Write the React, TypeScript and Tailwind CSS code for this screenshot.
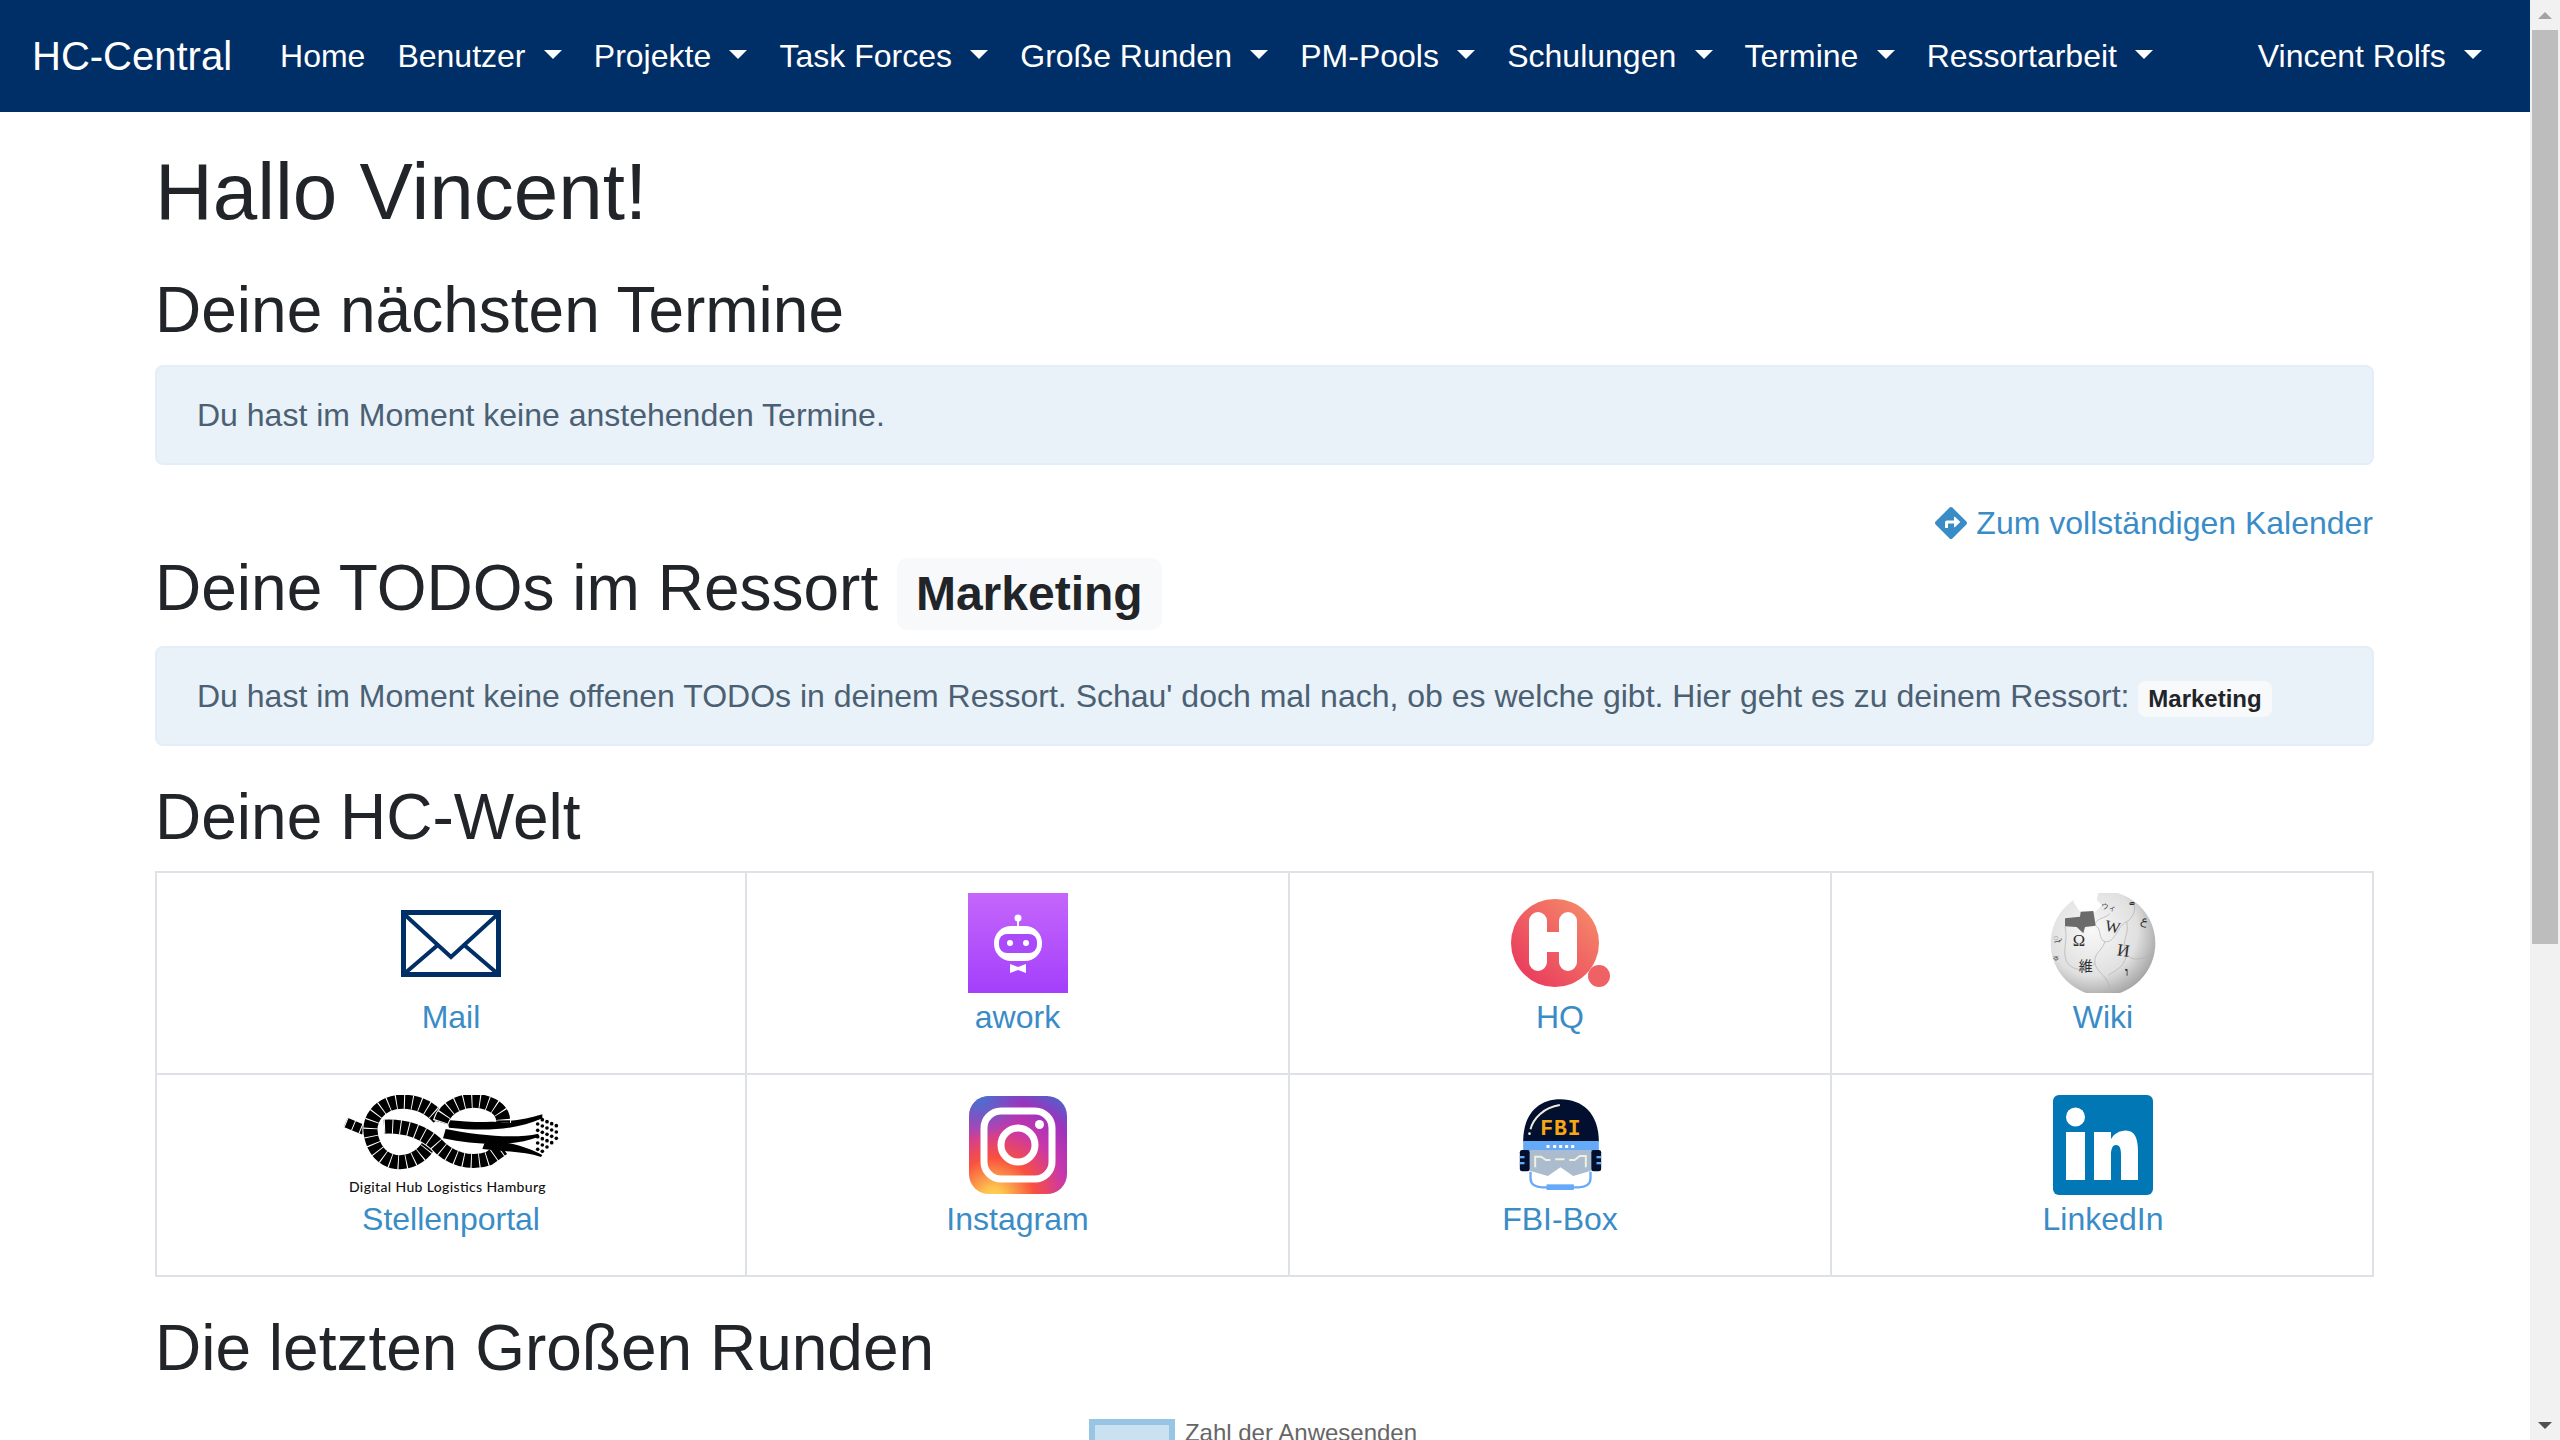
import { FaDirections } from 'react-icons/fa';
import type { ReactNode } from 'react';

const navItems = ['Benutzer', 'Projekte', 'Task Forces', 'Große Runden', 'PM-Pools', 'Schulungen', 'Termine', 'Ressortarbeit'];

function Caret() {
  return <span className="inline-block ml-[18.3px] align-[8px] border-t-[9.6px] border-x-[9.6px] border-x-transparent border-t-white" />;
}

function MailIcon() {
  return (
    <svg width="100" height="67" viewBox="0 0 100 67">
      <rect x="2.5" y="2.5" width="95" height="62" fill="#fff" stroke="#002e66" strokeWidth="5" />
      <path d="M3 4 L50 47 L97 4" fill="none" stroke="#002e66" strokeWidth="4" />
      <path d="M3 64 L38 34 M97 64 L62 34" fill="none" stroke="#002e66" strokeWidth="4" />
    </svg>
  );
}

function AworkIcon() {
  return (
    <svg width="100" height="100" viewBox="0 0 100 100">
      <defs>
        <linearGradient id="aw" x1="0" y1="0" x2="0" y2="1">
          <stop offset="0" stopColor="#c566fb" />
          <stop offset="1" stopColor="#a43ffb" />
        </linearGradient>
      </defs>
      <rect width="100" height="100" fill="url(#aw)" />
      <circle cx="50" cy="25" r="3.5" fill="#fff" />
      <rect x="49" y="25" width="2" height="10" fill="#fff" />
      <rect x="26" y="33" width="48" height="35" rx="17" fill="#fff" />
      <rect x="31" y="41" width="38" height="19" rx="8" fill="#a94bfb" />
      <circle cx="42" cy="50" r="3" fill="#fff" />
      <circle cx="58" cy="50" r="3" fill="#fff" />
      <path d="M42 71 L50 74 L58 71 L58 80 L50 77 L42 80 Z" fill="#fff" />
    </svg>
  );
}

function HqIcon() {
  return (
    <svg width="100" height="90" viewBox="0 0 100 90">
      <defs>
        <linearGradient id="hq" x1="0" y1="1" x2="1" y2="0">
          <stop offset="0" stopColor="#e8305c" />
          <stop offset="1" stopColor="#f6926a" />
        </linearGradient>
      </defs>
      <circle cx="45" cy="45" r="44" fill="url(#hq)" />
      <circle cx="89" cy="78" r="11" fill="#ee6265" />
      <path d="M19 23 a9 9 0 0 1 18 0 v11 h12 v-11 a9 9 0 0 1 18 0 v41 a9 9 0 0 1 -18 0 v-10 h-12 v10 a9 9 0 0 1 -18 0 z" fill="#fff" />
    </svg>
  );
}

function WikiIcon() {
  return (
    <svg width="106" height="100" viewBox="60 24 318 300" fontFamily="'Liberation Serif', serif">
      <defs>
        <radialGradient id="wk" cx="0.4" cy="0.38" r="0.72">
          <stop offset="0" stopColor="#f8f8f8" />
          <stop offset="0.6" stopColor="#e0e0e0" />
          <stop offset="1" stopColor="#949494" />
        </radialGradient>
      </defs>
      <circle cx="219" cy="175" r="157" fill="url(#wk)" />
      <path d="M140 20 H206 L200 45 L215 60 L195 82 L150 80 L130 50 Z" fill="#fff" />
      <path d="M105 100 L150 95 L152 80 L190 78 L197 122 L165 126 L160 145 L140 126 L105 124 Z" fill="#6b6b6b" />
      <g fill="none" stroke="#adadad" strokeWidth="2">
        <path d="M197 122 C215 130 205 165 225 170 C255 175 260 125 290 110 C310 100 320 70 310 55" />
        <path d="M225 170 C215 200 190 205 195 235 C200 265 235 270 240 315" />
        <path d="M105 124 C115 170 95 195 110 230 C125 255 165 265 195 235" />
        <path d="M290 110 C300 150 270 170 290 205 C300 230 340 225 370 205" />
        <path d="M235 270 C270 250 285 240 290 205" />
        <path d="M197 122 C190 100 230 100 240 85" />
      </g>
      <g fill="#2e2e2e">
        <text x="128" y="184" fontSize="50">Ω</text>
        <text x="226" y="142" fontSize="48" transform="rotate(12 250 125)">W</text>
        <text x="262" y="214" fontSize="52" transform="rotate(8 285 195)">И</text>
        <text x="146" y="258" fontSize="42" fontFamily="'Noto Sans CJK JP', sans-serif">維</text>
        <text x="285" y="272" fontSize="40" fontWeight="700">ו</text>
        <text x="335" y="118" fontSize="36" transform="rotate(20 345 105)">ع</text>
        <text x="298" y="62" fontSize="24">ወ</text>
        <text x="215" y="72" fontSize="22" transform="rotate(10 225 65)">ウィ</text>
        <text x="68" y="165" fontSize="26" transform="rotate(80 75 160)">ो</text>
        <text x="68" y="228" fontSize="24">ক</text>
      </g>
    </svg>
  );
}

function KnotIcon() {
  const dots: [number, number][] = [];
  const cols = [626, 640, 654, 668, 682];
  cols.forEach((x, i) => {
    for (let y = 90 + (4 - i) * 2 + i * 8; y < 212 - i * 10; y += 19) dots.push([x, y]);
  });
  const rope = (d: string, key: string, w = 42) => (
    <g key={key} fill="none">
      <path d={d} stroke="#fff" strokeWidth={w + 6} />
      <path d={d} stroke="#000" strokeWidth={w} />
      <path d={d} stroke="#fff" strokeWidth={w + 1} strokeDasharray="3 21" />
    </g>
  );
  return (
    <svg width="216" height="100" viewBox="42 30 648 300">
      {rope('M50 112 L105 135', 'tail', 30)}
      {rope('M305 170 C270 245 170 255 135 180 C100 100 160 50 220 50 C270 50 305 70 330 100', 'left')}
      {rope('M165 125 C230 122 280 140 320 175 C360 222 425 240 480 220 L522 190', 'middle')}
      <path d="M355 105 C450 115 560 115 640 88 L640 100 C560 135 470 140 360 128 Z" fill="#000" />
      <path d="M350 132 C450 152 560 162 628 146 L628 156 C550 185 450 182 342 160 Z" fill="#000" />
      <path d="M470 165 C540 170 600 188 640 210 L636 216 C590 200 530 200 460 192 Z" fill="#000" />
      {rope('M335 112 C350 60 410 40 460 50 C500 60 525 80 522 112', 'right')}
      {dots.map(([x, y]) => (
        <circle key={`${x}-${y}`} cx={x} cy={y} r="5.5" fill="#000" />
      ))}
      <text x="60" y="321" fontSize="42" fontWeight="500" textLength="590" fontFamily="Lato, 'Liberation Sans', sans-serif" fill="#111">
        Digital Hub Logistics Hamburg
      </text>
    </svg>
  );
}

function InstagramIcon() {
  return (
    <svg width="98" height="98" viewBox="0 0 98 98">
      <defs>
        <radialGradient id="ig" cx="0.25" cy="1.05" r="1.2">
          <stop offset="0" stopColor="#fed752" />
          <stop offset="0.1" stopColor="#fdc14f" />
          <stop offset="0.35" stopColor="#f9503f" />
          <stop offset="0.62" stopColor="#c837ab" />
          <stop offset="0.85" stopColor="#9b33bd" />
          <stop offset="1" stopColor="#5a5cc9" />
        </radialGradient>
        <radialGradient id="ig2" cx="0.1" cy="0" r="0.45">
          <stop offset="0" stopColor="#3f78d3" stopOpacity="0.95" />
          <stop offset="1" stopColor="#3f78d3" stopOpacity="0" />
        </radialGradient>
      </defs>
      <rect width="98" height="98" rx="20" fill="url(#ig)" />
      <rect width="98" height="98" rx="20" fill="url(#ig2)" />
      <rect x="15" y="15" width="68" height="68" rx="17" fill="none" stroke="#fff" strokeWidth="7" />
      <circle cx="49" cy="49" r="17" fill="none" stroke="#fff" strokeWidth="7" />
      <circle cx="70.5" cy="28.5" r="4.5" fill="#fff" />
    </svg>
  );
}

function FbiIcon() {
  return (
    <svg width="87" height="100" viewBox="50 15 260 300">
      <path d="M68 155 C68 70 115 28 180 28 C245 28 295 70 295 155 Z" fill="#020f2e" />
      <path d="M90 118 C98 85 130 52 178 45" fill="none" stroke="#efeedd" strokeWidth="6" />
      <circle cx="87" cy="131" r="4" fill="#efeedd" />
      <text x="181" y="136" textAnchor="middle" fontSize="64" fontWeight="700" fontFamily="'Liberation Mono', monospace" fill="#f7a711" letterSpacing="3">
        FBI
      </text>
      <path d="M68 153 H295 V180 L272 184 H90 L68 180 Z" fill="#65aaf8" />
      <g fill="#fff">
        <rect x="138" y="165" width="9" height="9" />
        <rect x="158" y="165" width="9" height="9" />
        <rect x="176" y="165" width="9" height="9" />
        <rect x="194" y="165" width="9" height="9" />
        <rect x="212" y="165" width="9" height="9" />
      </g>
      <rect x="58" y="180" width="30" height="64" rx="7" fill="#020f2e" />
      <rect x="272" y="180" width="30" height="64" rx="7" fill="#020f2e" />
      <g fill="#65aaf8">
        <rect x="58" y="198" width="14" height="7" />
        <rect x="58" y="216" width="14" height="7" />
        <rect x="288" y="198" width="14" height="7" />
        <rect x="288" y="216" width="14" height="7" />
      </g>
      <path d="M88 180 H272 V242 L218 258 L180 232 L142 258 L88 242 Z" fill="#aabccd" />
      <path d="M104 232 V200 H122 L136 210 H150 M164 208 H192 M206 210 H222 L238 198 H256 V232" fill="none" stroke="#f0efe0" strokeWidth="6" />
      <path d="M90 245 V265 C90 283 105 292 125 292 H235 C255 292 270 283 270 265 V245" fill="none" stroke="#6aa9f5" strokeWidth="7" />
      <rect x="138" y="283" width="82" height="17" fill="#65aaf8" />
    </svg>
  );
}

function LinkedinIcon() {
  return (
    <svg width="100" height="100" viewBox="0 0 100 100">
      <rect width="100" height="100" rx="6" fill="#0177b5" />
      <circle cx="22.5" cy="22" r="9.5" fill="#fff" />
      <rect x="13" y="37" width="19" height="48" fill="#fff" />
      <path d="M41 37 H58 V44 C61 39 66 35.5 73 35.5 C82 35.5 85 44 85 56 V85 H68 V60 C68 54 67 50 63 50 C59 50 58 55 58 60 V85 H41 Z" fill="#fff" />
    </svg>
  );
}

function LinkCell({ icon, label }: { icon: ReactNode; label: string }) {
  return (
    <div className="border-l-2 border-t-2 border-[#dee2e6] pt-[20px] pb-[32px] flex flex-col items-center">
      <div className="h-[100px] flex items-center justify-center">{icon}</div>
      <a className="text-[#3a8cc7] leading-[48px]">{label}</a>
    </div>
  );
}

function Alert({ children }: { children: ReactNode }) {
  return (
    <div className="border-2 border-[#e3eef8] bg-[#e9f1f9] rounded-[8px] px-[40px] py-[24px] text-[#4b6072] leading-[48px]">
      {children}
    </div>
  );
}

export default function App() {
  return (
    <div className="flex h-screen w-screen overflow-hidden bg-white text-[32px] text-[#212529] font-['Liberation_Sans',Arial,sans-serif]">
      <div className="flex-1 min-w-0">
        <nav className="h-[112px] bg-[#002e66] flex items-center px-[32px] text-white">
          <span className="text-[40px] mr-[32px]">HC-Central</span>
          <span className="px-[16px]">Home</span>
          {navItems.map((item) => (
            <span key={item} className="px-[16px] whitespace-nowrap">
              {item}
              <Caret />
            </span>
          ))}
          <span className="ml-auto px-[16px] whitespace-nowrap">
            Vincent Rolfs
            <Caret />
          </span>
        </nav>

        <main className="pl-[155px] pr-[156px] pt-[32px]">
          <h1 className="text-[80px] leading-[96px] mb-[32px]">Hallo Vincent!</h1>
          <h2 className="text-[64px] leading-[77px] mb-[16px]">Deine nächsten Termine</h2>
          <Alert>Du hast im Moment keine anstehenden Termine.</Alert>

          <div className="mt-[34px] mb-[3px] pr-[1px] flex justify-end items-center leading-[48px] text-[#3a8cc7]">
            <FaDirections size={32} className="mr-[9px]" />
            <a>Zum vollständigen Kalender</a>
          </div>

          <h2 className="text-[64px] leading-[77px] mb-[16px]">
            Deine TODOs im Ressort{' '}
            <span className="inline-block text-[48px] font-bold leading-none bg-[#f8f9fa] rounded-[10px] px-[19px] py-[12px] ml-[1px]">Marketing</span>
          </h2>
          <Alert>
            Du hast im Moment keine offenen TODOs in deinem Ressort. Schau' doch mal nach, ob es welche gibt. Hier geht es zu deinem Ressort:{' '}
            <span className="inline-block text-[24px] font-bold leading-none bg-[#f8f9fa] text-[#212529] rounded-[8px] px-[10px] py-[6px]">Marketing</span>
          </Alert>

          <h2 className="text-[64px] leading-[77px] mt-[33px] mb-[15px]">Deine HC-Welt</h2>
          <div className="grid grid-cols-[590px_543px_542px_544px] border-r-2 border-b-2 border-[#dee2e6]">
            <LinkCell icon={<MailIcon />} label="Mail" />
            <LinkCell icon={<AworkIcon />} label="awork" />
            <LinkCell icon={<HqIcon />} label="HQ" />
            <LinkCell icon={<WikiIcon />} label="Wiki" />
            <LinkCell icon={<KnotIcon />} label="Stellenportal" />
            <LinkCell icon={<InstagramIcon />} label="Instagram" />
            <LinkCell icon={<FbiIcon />} label="FBI-Box" />
            <LinkCell icon={<LinkedinIcon />} label="LinkedIn" />
          </div>

          <h2 className="text-[64px] leading-[77px] mt-[33px] mb-[16px]">Die letzten Großen Runden</h2>
          <div className="flex justify-center pr-[23px] mt-[32px] text-[24px] text-[#666] leading-[28px]">
            <span className="w-[86px] h-[30px] border-[6px] border-[#97c5e3] bg-[#c9e1f0] mr-[10px]" />
            <span>Zahl der Anwesenden</span>
          </div>
        </main>
      </div>

      {/* Scrollbar */}
      <div className="w-[30px] h-full bg-[#f1f1f1] flex flex-col items-center shrink-0">
        <div className="h-[30px] flex items-center justify-center">
          <span className="border-b-[7px] border-x-[7px] border-x-transparent border-b-[#a3a3a3]" />
        </div>
        <div className="w-[26px] h-[914px] bg-[#bdbdbd]" />
        <div className="mt-auto h-[30px] flex items-center justify-center">
          <span className="border-t-[7px] border-x-[7px] border-x-transparent border-t-[#505050]" />
        </div>
      </div>
    </div>
  );
}
